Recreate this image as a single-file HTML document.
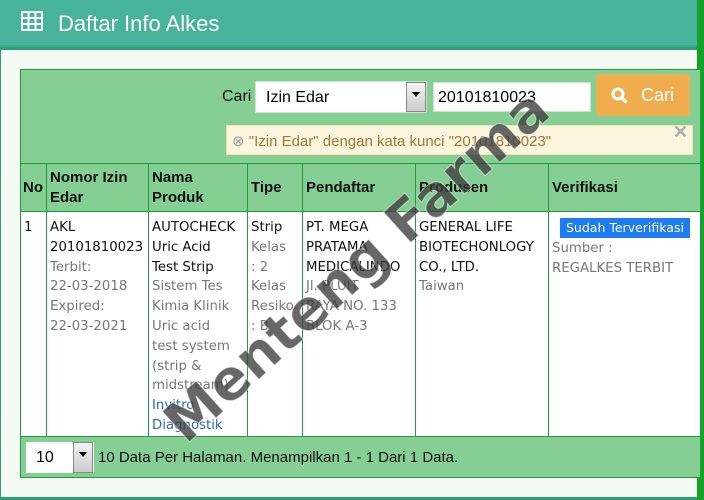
<!DOCTYPE html>
<html><head><meta charset="utf-8"><style>
*{box-sizing:border-box;margin:0;padding:0}
body{width:704px;height:500px;overflow:hidden;background:#2aa17a;position:relative;font-family:"Liberation Sans",sans-serif}
.strip{position:absolute;left:697px;top:0;width:7px;height:500px;background:#13a32a}
.hdr{position:absolute;left:0;top:0;width:697px;height:47px;background:#48b39b;border-bottom:2px solid #3aa88e}
.hdr .t{position:absolute;left:58px;top:11px;color:#fff;font-size:22px}
.panel{position:absolute;left:1px;top:50px;width:696px;height:447px;background:#f6faf4}
.box{position:absolute;left:20px;top:69px;width:681px;height:409px;background:#85cf95;border:1px solid #1f9c3c}
.abs{position:absolute}
.sel{background:#fff;border:1px solid #c9e6c9;font-size:16px;color:#000}
.arr{position:absolute;background:linear-gradient(#f4f4f4,#ccc);border:1px solid #888}
.arr:after{content:"";position:absolute;left:5px;top:9px;border-left:4px solid transparent;border-right:4px solid transparent;border-top:5px solid #000}
.btn{background:#f0ad4e;border-radius:4px;color:#fff;font-size:18px}
.alert{background:#fcf6df;border:1px solid #efe1b0;color:#a07a3a;font-size:15px}
table{position:absolute;left:20px;top:163px;border-collapse:collapse;font-family:"DejaVu Sans",sans-serif;font-size:13.3px}
th{font-family:"Liberation Sans",sans-serif;font-size:15px;font-weight:bold;text-align:left;vertical-align:middle;height:48px;padding:0 3px;border:1px solid #1f9c3c;line-height:20px;color:#111}
td{background:#fff;vertical-align:top;border:1px solid #1f9c3c;height:225px;padding:6px 2px 0 3px;line-height:19.8px;color:#111;white-space:nowrap}
.g{color:#777}.b{color:#2a6fb0}
.ver{background:#1e7cf2;color:#fff;font-size:12.5px;padding:0 6px;display:inline-block;line-height:20px;margin-left:8px}
.wm{position:absolute;left:357px;top:266px;transform:translate(-50%,-50%) rotate(-42deg);font-family:"DejaVu Sans",sans-serif;font-weight:bold;font-size:56px;color:rgba(60,60,60,.78);white-space:nowrap;-webkit-text-stroke:1px rgba(255,255,255,.5)}
</style></head><body>
<div class="strip"></div>
<div class="hdr">
<svg class="abs" style="left:21px;top:11px" width="22" height="20" viewBox="0 0 22 20"><rect x="1" y="1" width="20" height="18" fill="none" stroke="#fff" stroke-width="2"/><path d="M1 7H21M1 13H21M7.5 1V19M14.5 1V19" stroke="#fff" stroke-width="2"/></svg>
<div class="t">Daftar Info Alkes</div></div>
<div class="panel"></div>
<div class="box"></div>
<div class="abs" style="left:222px;top:88px;font-size:16px;color:#111">Cari</div>
<div class="abs sel" style="left:255px;top:81px;width:172px;height:32px;padding:7px 0 0 10px">Izin Edar</div>
<div class="arr" style="left:406px;top:82px;width:20px;height:30px"></div>
<div class="abs sel" style="left:433px;top:82px;width:158px;height:30px;padding:6px 0 0 4px">20101810023</div>
<div class="abs btn" style="left:596px;top:74px;width:94px;height:42px"><svg class="abs" style="left:15px;top:13px" width="18" height="18" viewBox="0 0 18 18"><circle cx="7" cy="7" r="5" fill="none" stroke="#fff" stroke-width="3"/><path d="M10.5 10.5L15.5 15.5" stroke="#fff" stroke-width="3.2"/></svg><span class="abs" style="left:45px;top:11px">Cari</span></div>
<div class="abs alert" style="left:226px;top:125px;width:467px;height:30px;padding:6px 0 0 5px"><span style="color:#999">⊗</span> "Izin Edar" dengan kata kunci "20101810023"</div>
<div class="abs" style="left:673px;top:122px;color:#aaa;font-size:18px;font-weight:bold">✕</div>
<table>
<tr><th style="width:26px;padding:0 2px">No</th><th style="width:102px">Nomor Izin<br>Edar</th><th style="width:99px">Nama<br>Produk</th><th style="width:55px">Tipe</th><th style="width:113px">Pendaftar</th><th style="width:133px">Produsen</th><th style="width:152px">Verifikasi</th></tr>
<tr><td>1</td><td>AKL<br>20101810023<br><span class="g">Terbit:<br>22-03-2018<br>Expired:<br>22-03-2021</span></td>
<td>AUTOCHECK<br>Uric Acid<br>Test Strip<br><span class="g">Sistem Tes<br>Kimia Klinik<br>Uric acid<br>test system<br>(strip &amp;<br>midstream)</span><br><span class="b">Invitro<br>Diagnostik</span></td>
<td>Strip<br><span class="g">Kelas<br>: 2<br>Kelas<br>Resiko<br>: B</span></td>
<td>PT. MEGA<br>PRATAMA<br>MEDICALINDO<br><span class="g">Jl. PLUIT<br>RAYA NO. 133<br>BLOK A-3</span></td>
<td>GENERAL LIFE<br>BIOTECHONLOGY<br>CO., LTD.<br><span class="g">Taiwan</span></td>
<td style="padding-top:6px"><span class="ver">Sudah Terverifikasi</span><br><span class="g">Sumber :<br>REGALKES TERBIT</span></td></tr>
</table>
<div class="abs sel" style="left:26px;top:442px;width:68px;height:31px;padding:7px 0 0 10px;border:none">10</div>
<div class="arr" style="left:73px;top:442px;width:20px;height:31px"></div>
<div class="abs" style="left:98px;top:449px;font-size:15px;color:#111">10 Data Per Halaman. Menampilkan 1 - 1 Dari 1 Data.</div>
<div class="wm">Menteng Farma</div>
</body></html>
